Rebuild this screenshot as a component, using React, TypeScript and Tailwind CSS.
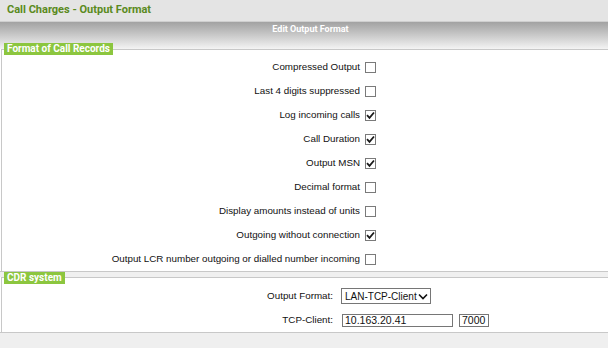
import React from 'react';

const records: { label: string; checked: boolean }[] = [
    { label: 'Compressed Output', checked: false },
    { label: 'Last 4 digits suppressed', checked: false },
    { label: 'Log incoming calls', checked: true },
    { label: 'Call Duration', checked: true },
    { label: 'Output MSN', checked: true },
    { label: 'Decimal format', checked: false },
    { label: 'Display amounts instead of units', checked: false },
    { label: 'Outgoing without connection', checked: true },
    { label: 'Output LCR number outgoing or dialled number incoming', checked: false },
];

// Old-style square checkbox (white box, dark tick)
const Check: React.FC<{ checked: boolean }> = ({ checked }) => (
    <span className="flex items-center justify-center w-[11px] h-[11px] border border-[#7a7a7a] bg-white">
        {checked && (
            <svg width="9" height="9" viewBox="0 0 9 9">
                <path d="M1 4.2 L3.5 6.8 L8 1.5" fill="none" stroke="#1a1a1a" strokeWidth="1.8" />
            </svg>
        )}
    </span>
);

const Legend: React.FC<{ text: string }> = ({ text }) => (
    <div className="flex">
        <span
            className="ml-[2px] px-[3px] h-[12px] leading-[12px] bg-[#8cc63f] text-white font-bold text-[10px]"
            style={{ fontFamily: 'Roboto, sans-serif' }}
        >
            {text}
        </span>
    </div>
);

export default function App() {
    return (
        <div
            className="w-[608px] h-[348px] bg-white overflow-hidden flex flex-col text-[9.8px] text-[#111]"
            style={{ fontFamily: '"Liberation Sans", Arial, sans-serif' }}
        >
            {/* Page title */}
            <div className="h-[22px] shrink-0 bg-[#e4e4e4] border-b border-[#cfcfcf] flex items-center px-[7px]">
                <span className="text-[#5a8a20] font-bold text-[11px]" style={{ fontFamily: 'Roboto, sans-serif' }}>
                    Call Charges - Output Format
                </span>
            </div>

            {/* Gradient header */}
            <div className="h-[27px] shrink-0 bg-gradient-to-b from-[#a2a2a2] to-[#f4f4f4] flex justify-center pt-[1px] pl-[13px]">
                <span className="text-white font-bold text-[9px]" style={{ fontFamily: 'Roboto, sans-serif' }}>
                    Edit Output Format
                </span>
            </div>

            {/* Format of Call Records */}
            <div className="border-t border-l border-[#c8c8c8] ml-[1px]">
                <div className="-mt-[7px]">
                    <Legend text="Format of Call Records" />
                </div>
                {records.map((r) => (
                    <div key={r.label} className="h-[24px] grid grid-cols-[358px_auto] items-center gap-x-[5px]">
                        <span className="text-right">{r.label}</span>
                        <Check checked={r.checked} />
                    </div>
                ))}
            </div>

            {/* Spacer band between sections */}
            <div className="h-[6px] shrink-0 bg-[#f0f0f0] border-t border-[#c8c8c8]" />

            {/* CDR system */}
            <div className="border-t border-l border-[#c8c8c8] ml-[1px]">
                <div className="-mt-[6px]">
                    <Legend text="CDR system" />
                </div>
                <div className="h-[24px] grid grid-cols-[331px_auto] items-center gap-x-[8px]">
                    <span className="text-right">Output Format:</span>
                    <div className="flex items-center w-[90px] h-[16px] border border-[#767676] bg-white pl-[3px] pr-[2px] whitespace-nowrap text-[10px]">
                        <span className="flex-1">LAN-TCP-Client</span>
                        <svg width="10" height="7" viewBox="0 0 10 7">
                            <path d="M1 1.5 L5 5.5 L9 1.5" fill="none" stroke="#111" strokeWidth="1.6" />
                        </svg>
                    </div>
                </div>
                <div className="h-[24px] grid grid-cols-[331px_auto] items-center gap-x-[9px]">
                    <span className="text-right">TCP-Client:</span>
                    <div className="flex items-center gap-[6px]">
                        <span className="w-[111px] h-[13px] leading-[11px] border border-[#767676] px-[2px] text-[10.5px]">10.163.20.41</span>
                        <span className="w-[30px] h-[13px] leading-[11px] border border-[#767676] px-[2px] text-[10.5px]">7000</span>
                    </div>
                </div>
            </div>

            {/* Footer */}
            <div className="flex-1 bg-[#efefef] border-t border-[#c8c8c8]" />
        </div>
    );
}
